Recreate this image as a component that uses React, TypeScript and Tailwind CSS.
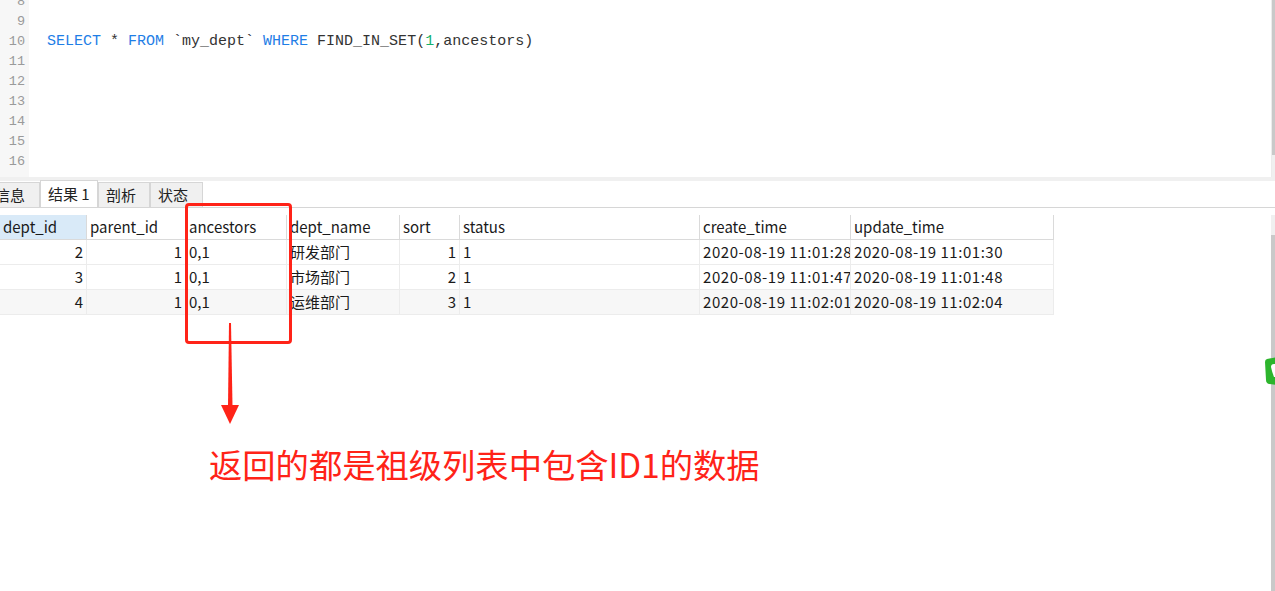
import React from "react";

const lineNumbers = [8, 9, 10, 11, 12, 13, 14, 15, 16];

const columns = [
  { key: "dept_id", width: "w-[87px]", align: "right" },
  { key: "parent_id", width: "w-[99px]", align: "right" },
  { key: "ancestors", width: "w-[101px]", align: "left" },
  { key: "dept_name", width: "w-[113px]", align: "left" },
  { key: "sort", width: "w-[60px]", align: "right" },
  { key: "status", width: "w-[240px]", align: "left" },
  { key: "create_time", width: "w-[151px]", align: "left" },
  { key: "update_time", width: "w-[203px]", align: "left" },
];

const rows = [
  ["2", "1", "0,1", "研发部门", "1", "1", "2020-08-19 11:01:28", "2020-08-19 11:01:30"],
  ["3", "1", "0,1", "市场部门", "2", "1", "2020-08-19 11:01:47", "2020-08-19 11:01:48"],
  ["4", "1", "0,1", "运维部门", "3", "1", "2020-08-19 11:02:01", "2020-08-19 11:02:04"],
];

const tabs = [
  { label: "信息", width: "w-[53px]", active: false },
  { label: "结果 1", width: "w-[58px]", active: true },
  { label: "剖析", width: "w-[52px]", active: false },
  { label: "状态", width: "w-[53px]", active: false },
];

function Editor() {
  return (
    <div className="flex h-[177px] overflow-hidden">
      <div className="w-[29px] bg-[#f7f7f7] flex flex-col items-end pr-[4px] -mt-[8px]">
        {lineNumbers.map((n) => (
          <div
            key={n}
            className="h-[20px] leading-[20px] text-[13.5px] text-[#9a9a9a] font-['Liberation_Mono',monospace]"
          >
            {n}
          </div>
        ))}
      </div>
      <div className="flex-1 -mt-[8px] pl-[18px] font-['Liberation_Mono',monospace] text-[15px]">
        {lineNumbers.map((n) => (
          <div key={n} className="h-[20px] leading-[20px] whitespace-pre text-[#333]">
            {n === 10 ? (
              <>
                <span className="text-[#1f7ee6]">SELECT</span> *{" "}
                <span className="text-[#1f7ee6]">FROM</span> `my_dept`{" "}
                <span className="text-[#1f7ee6]">WHERE</span> FIND_IN_SET(
                <span className="text-[#13b06b]">1</span>,ancestors)
              </>
            ) : (
              " "
            )}
          </div>
        ))}
      </div>
      {/* editor scrollbar */}
      <div className="w-[4px] flex flex-col border-l border-[#ececec]">
        <div className="h-[155px] bg-[#c9c9c9]" />
        <div className="flex-1 bg-[#f0f0f0]" />
      </div>
    </div>
  );
}

function Tabs() {
  return (
    <div className="flex items-end h-[27px] border-b border-[#d6d6d6] -ml-[13px]">
      {tabs.map((t) => (
        <div
          key={t.label}
          className={`${t.width} flex items-center pl-[7px] text-[15px] text-[#222] border border-b-0 border-[#d6d6d6] ${
            t.active ? "h-[27px] bg-white" : "h-[25px] bg-[#f0f0f0]"
          }`}
        >
          {t.label}
        </div>
      ))}
    </div>
  );
}

function ResultTable() {
  return (
    <div className="mt-[7px] w-[1054px] text-[15px] text-[#1a1a1a]">
      <div className="flex h-[25px] border-b border-[#dadada]">
        {columns.map((c, i) => (
          <div
            key={c.key}
            className={`${c.width} pl-[3px] leading-[24px] border-r border-[#dadada] whitespace-nowrap overflow-hidden ${
              i === 0 ? "bg-[#d9eaf8]" : ""
            }`}
          >
            {c.key}
          </div>
        ))}
      </div>
      {rows.map((r, ri) => (
        <div
          key={ri}
          className={`flex h-[25px] border-b border-[#ececec] ${ri === 2 ? "bg-[#f7f7f7]" : "bg-white"}`}
        >
          {r.map((v, ci) => (
            <div
              key={ci}
              className={`${columns[ci].width} px-[3px] leading-[24px] border-r border-[#ececec] whitespace-nowrap overflow-hidden ${
                columns[ci].align === "right" ? "text-right" : "text-left"
              } ${ci >= 6 ? "tracking-[0.55px] pr-0" : ""}`}
            >
              {v}
            </div>
          ))}
        </div>
      ))}
    </div>
  );
}

export default function App() {
  return (
    <div className="relative w-[1275px] h-[591px] bg-white overflow-hidden font-['Noto_Sans_CJK_SC','Noto_Sans',sans-serif]">
      <Editor />
      <div className="h-[4px] bg-[#f0f0f0]" />

      <div className="flex">
        <div className="flex-1">
          <Tabs />
          <ResultTable />
        </div>
      </div>

      {/* result scrollbar */}
      <div className="absolute right-0 top-[215px] bottom-0 w-[4px] flex flex-col">
        <div className="h-[20px] bg-[#f0f0f0]" />
        <div className="flex-1 bg-[#c9c9c9]" />
      </div>

      {/* annotation: red box */}
      <div className="absolute left-[185px] top-[203px] w-[107px] h-[141px] border-[3px] border-[#ff2318] rounded-[4px]" />

      {/* annotation: arrow */}
      <svg className="absolute left-[219px] top-[322px]" width="22" height="103" viewBox="0 0 22 103">
        <polygon points="10,1 12,1 13.5,84 9,84" fill="#ff2318" />
        <polygon points="2,83 20,83 11,102" fill="#ff2318" />
      </svg>

      {/* annotation: caption */}
      <div className="absolute left-[209px] top-[444px] text-[33.3px] leading-[40px] text-[#ff2318] whitespace-nowrap">
        返回的都是祖级列表中包含ID1的数据
      </div>

      {/* floating green widget at edge */}
      <svg className="absolute left-[1264px] top-[355px]" width="14" height="32" viewBox="0 0 14 32">
        <path d="M3 4 L14 2 L14 30 L5 29 Q2 28 2 25 L1 7 Q1 4.5 3 4 Z" fill="#2db52d" />
        <path d="M7 12 Q7 9 10 9 L14 9 L14 22 L10 22 Q8 17 7 12 Z" fill="#ffffff" />
      </svg>
    </div>
  );
}
